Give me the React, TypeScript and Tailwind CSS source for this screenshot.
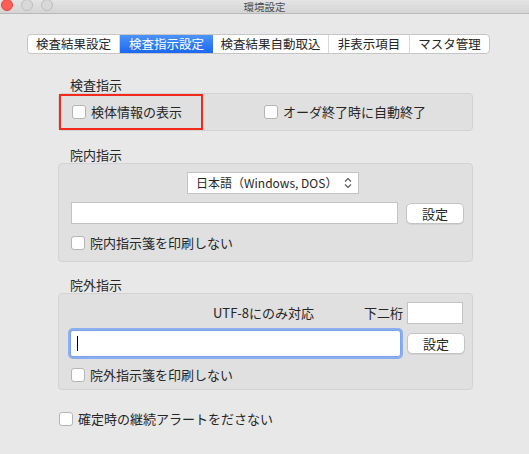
const font = { fontFamily: '"Noto Sans CJK JP", "Liberation Sans", sans-serif' };

const tabs = [
  { label: "検査結果設定", w: "w-[92px]" },
  { label: "検査指示設定", w: "w-[93px]" },
  { label: "検査結果自動取込", w: "w-[116px]" },
  { label: "非表示項目", w: "w-[81px]" },
  { label: "マスタ管理", w: "flex-1" },
];

function Check({ label }: { label: string }) {
  return (
    <label className="flex items-center gap-[5px] text-[13px] text-[#262626]">
      <span className="w-[14px] h-[14px] rounded-[3px] border border-[#b4b4b4] bg-white" />
      <span>{label}</span>
    </label>
  );
}

function Btn() {
  return (
    <button className="shrink-0 w-[58px] h-[21px] rounded-[5px] border border-[#c3c3c3] bg-white text-[13px] text-[#262626] leading-none shadow-[0_1px_0_rgba(0,0,0,0.06)]">
      設定
    </button>
  );
}

export default function App() {
  return (
    <div className="w-[529px] h-[454px] bg-[#e8e8e8] overflow-hidden" style={font}>
      <div className="relative h-[14px] bg-gradient-to-b from-[#e4e4e4] to-[#d4d4d4] border-b border-[#b8b8b8]">
        <div className="absolute left-[1px] top-[-1px] flex gap-[8px]">
          <span className="w-[12px] h-[12px] rounded-full bg-[#fc5f57] border border-[#e2463f]" />
          <span className="w-[12px] h-[12px] rounded-full bg-[#d8d8d8] border border-[#bdbdbd]" />
          <span className="w-[12px] h-[12px] rounded-full bg-[#d8d8d8] border border-[#bdbdbd]" />
        </div>
        <div className="text-center text-[10.5px] leading-[13px] text-[#4d4d4d]">環境設定</div>
      </div>

      <div className="ml-[27px] mt-[20px] flex w-[463px] h-[20px] rounded-[4px] border border-[#c6c6c6] bg-white overflow-hidden text-[12.5px] leading-[18px] text-[#262626]">
        {tabs.map((t, i) => (
          <div
            key={t.label}
            className={
              t.w +
              " text-center whitespace-nowrap " +
              (i === 1
                ? "bg-gradient-to-b from-[#4b93fa] to-[#1b67f0] text-white"
                : i < 4
                ? "border-r border-[#d8d8d8]"
                : "")
            }
          >
            {t.label}
          </div>
        ))}
      </div>

      <div className="ml-[58px] w-[415px]">
        <div className="mt-[24px] pl-[12px] text-[13px] leading-[14px] text-[#262626]">検査指示</div>
        <div className="mt-[1px] h-[38px] rounded-[4px] border border-[#d3d3d3] bg-[#e0e0e0] flex items-center">
          <div className="w-[144px] h-[36px] border-2 border-[#f4281c] flex items-center pl-[11px]">
            <Check label="検体情報の表示" />
          </div>
          <div className="ml-[61px]">
            <Check label="オーダ終了時に自動終了" />
          </div>
        </div>

        <div className="mt-[17px] pl-[12px] text-[13px] leading-[14px] text-[#262626]">院内指示</div>
        <div className="mt-[1px] h-[99px] rounded-[4px] border border-[#d3d3d3] bg-[#e0e0e0] pl-[12px] pt-[8px]">
          <div className="ml-[116px] w-[172px] h-[22px] border border-[#c3c3c3] bg-white flex items-center text-[12px] text-[#262626]">
            <span className="pl-[8px] whitespace-nowrap">日本語（Windows, DOS）</span>
            <svg className="shrink-0 ml-auto mr-[6px]" width="8" height="12" viewBox="0 0 8 12" fill="none" stroke="#555" strokeWidth="1.1">
              <path d="M1 4.5 L4 1.5 L7 4.5" />
              <path d="M1 7.5 L4 10.5 L7 7.5" />
            </svg>
          </div>
          <div className="mt-[8px] flex items-center gap-[8px]">
            <div className="shrink-0 w-[327px] h-[22px] bg-white border border-[#c3c3c3]" />
            <Btn />
          </div>
          <div className="mt-[9px]">
            <Check label="院内指示箋を印刷しない" />
          </div>
        </div>

        <div className="mt-[16px] pl-[12px] text-[13px] leading-[14px] text-[#262626]">院外指示</div>
        <div className="mt-[1px] h-[97px] rounded-[4px] border border-[#d3d3d3] bg-[#e0e0e0] pl-[11px] pt-[8px]">
          <div className="flex items-center h-[22px] pr-[9px] text-[13px] text-[#262626]">
            <span className="ml-[143px] whitespace-nowrap">UTF-8にのみ対応</span>
            <span className="ml-auto">下二桁</span>
            <div className="ml-[4px] w-[56px] h-[22px] bg-white border border-[#c3c3c3]" />
          </div>
          <div className="mt-[6px] flex items-center gap-[6px]">
            <div className="shrink-0 w-[331px] h-[27px] bg-white border border-[#7da2ea] rounded-[3px] ring-[2px] ring-[#8aaef0] flex items-center pl-[6px]">
              <span className="w-[1px] h-[15px] bg-black" />
            </div>
            <Btn />
          </div>
          <div className="mt-[8px] ml-[1px]">
            <Check label="院外指示箋を印刷しない" />
          </div>
        </div>
      </div>

      <div className="ml-[59px] mt-[19px]">
        <Check label="確定時の継続アラートをださない" />
      </div>
    </div>
  );
}
